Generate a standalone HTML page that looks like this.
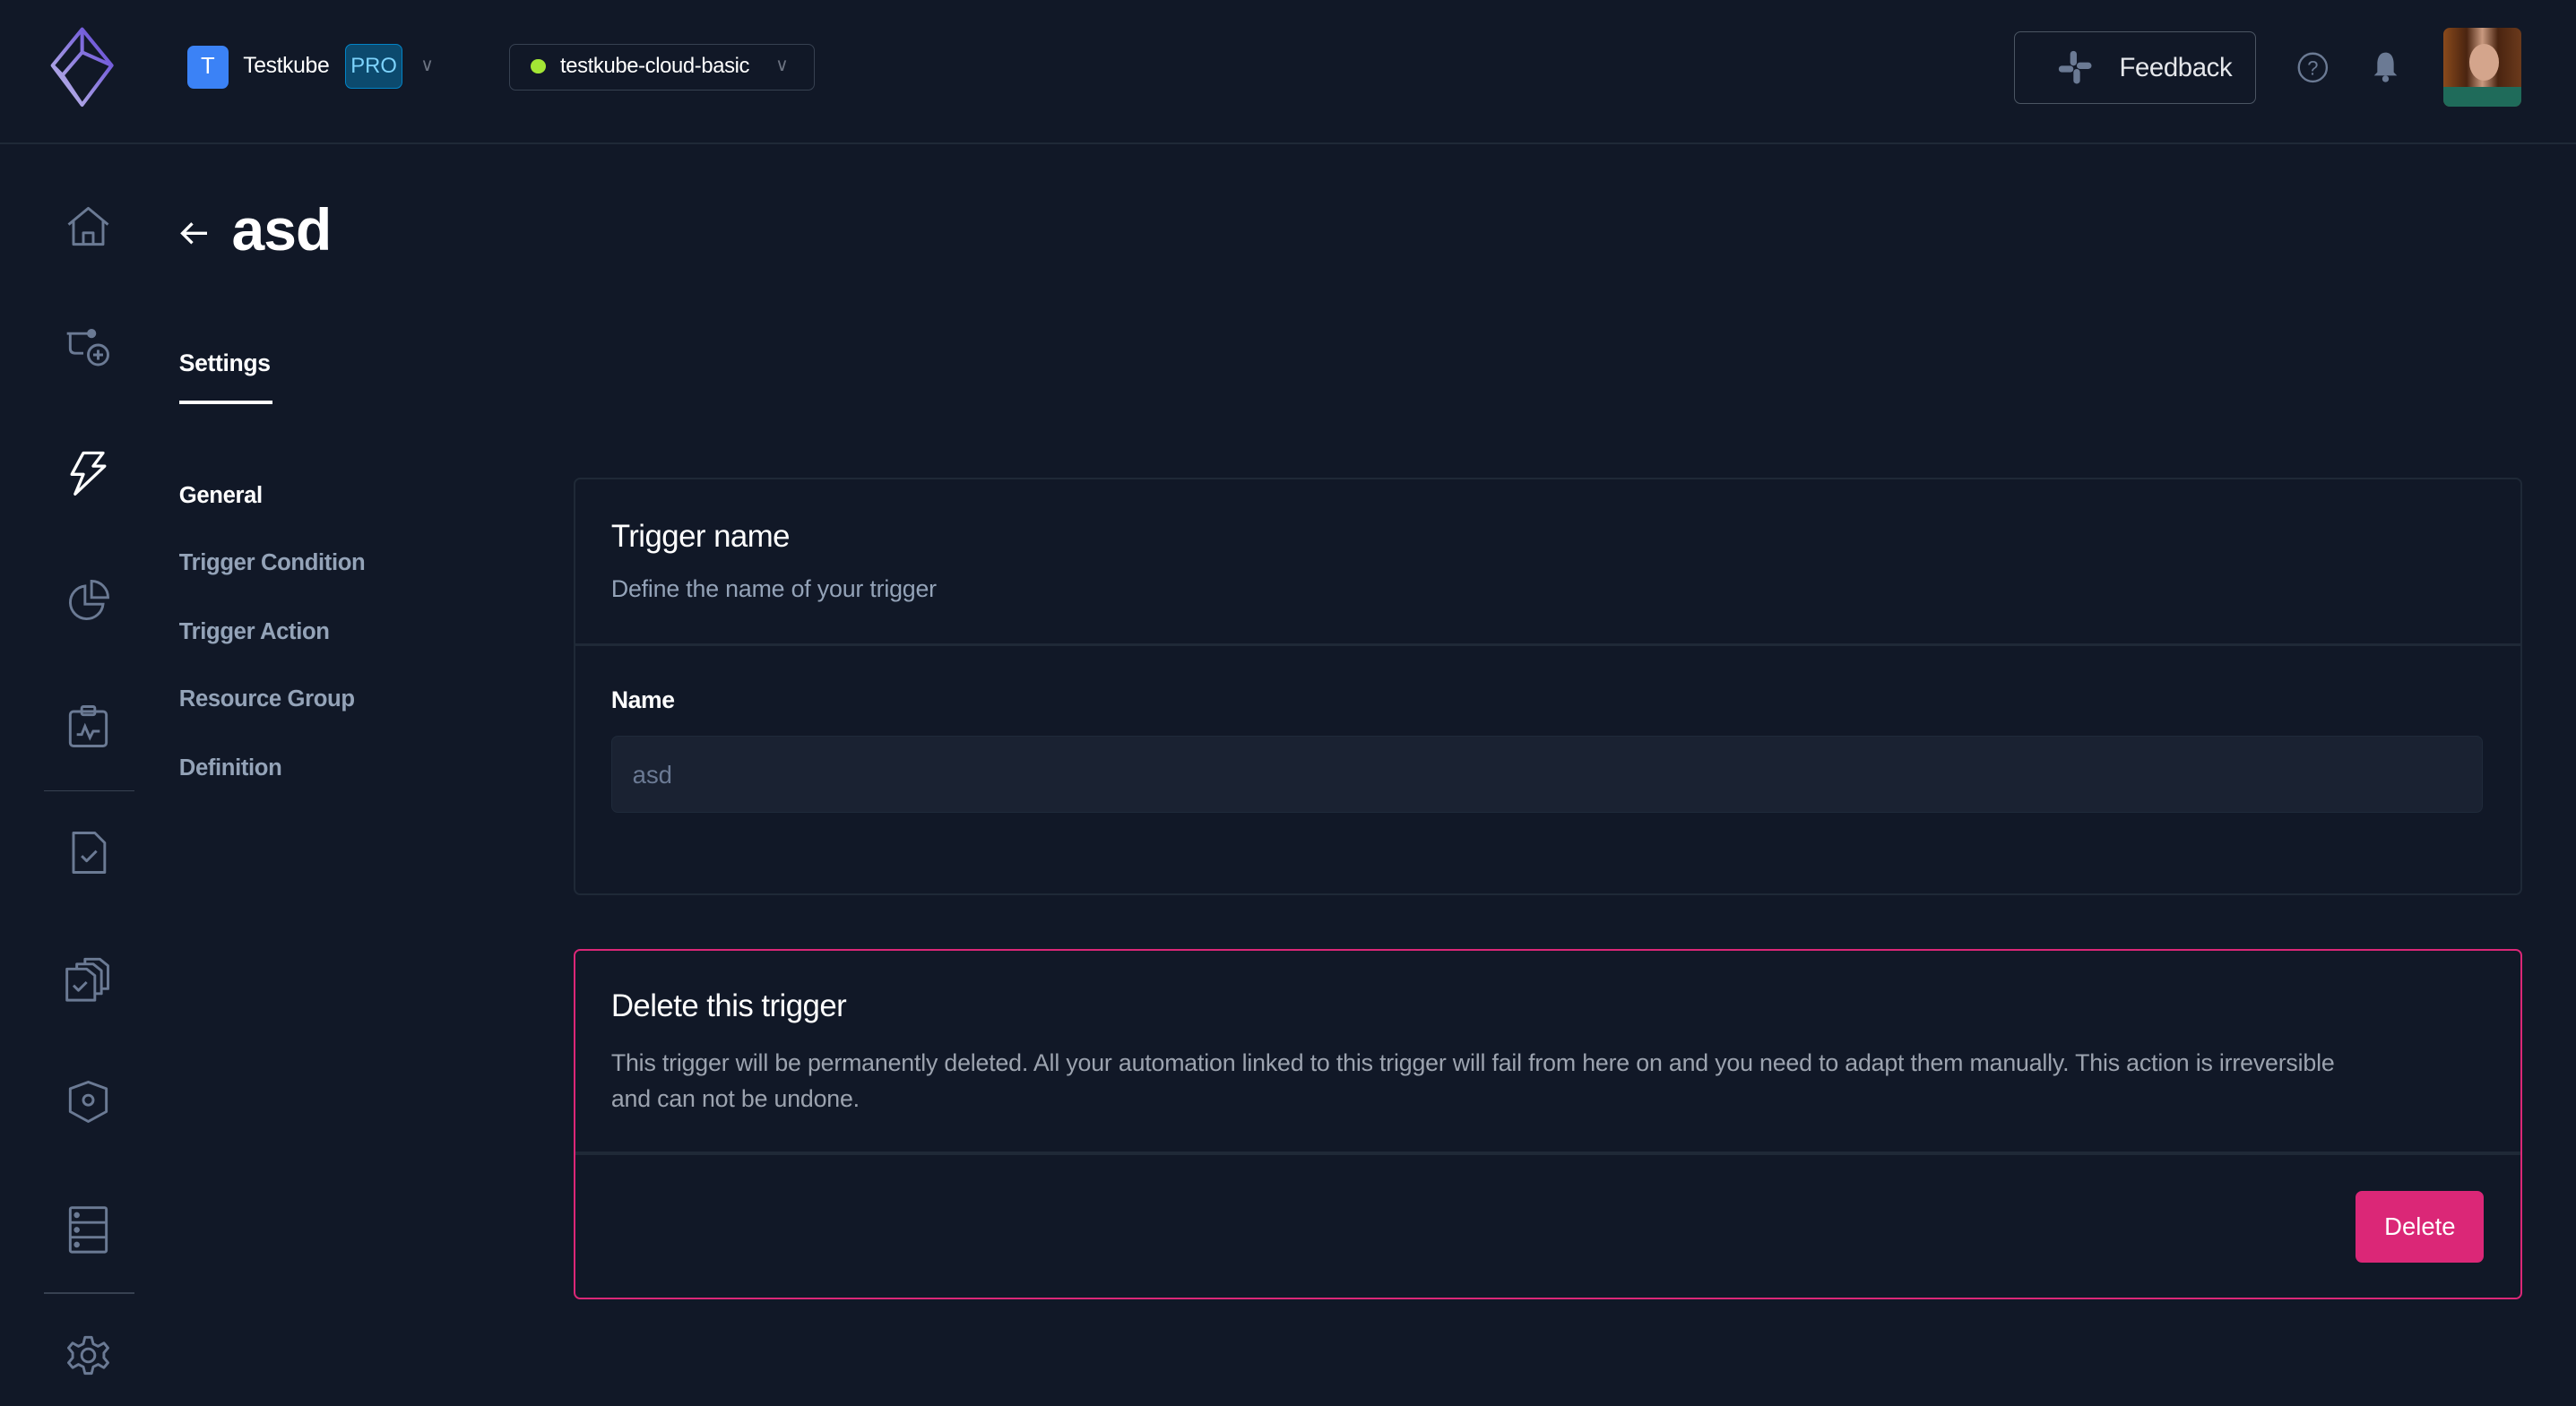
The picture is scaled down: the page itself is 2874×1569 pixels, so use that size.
<!DOCTYPE html>
<html><head><meta charset="utf-8"><style>
html,body{margin:0;padding:0;background:#111827;overflow:hidden}
#r{position:relative;width:1568px;height:856px;zoom:1.8329;font-family:"Liberation Sans",sans-serif;color:#fff;background:#111827}
.a{position:absolute}
.ic{position:absolute;left:39px;width:30px;height:30px}
.nav{position:absolute;left:109px;font-size:14px;font-weight:bold;color:#94a3b8;letter-spacing:-0.2px}
</style></head><body><div id="r">
<div class="a" style="left:0;top:87px;width:1568px;height:1px;background:#1f2937"></div>
<svg class="a" style="left:30px;top:16px" width="44" height="50" viewBox="0 0 44 50">
<defs><linearGradient id="g" x1="0" y1="1" x2="1" y2="0"><stop offset="0" stop-color="#c4c0e8"/><stop offset="1" stop-color="#5b3fd6"/></linearGradient></defs>
<g fill="none" stroke="url(#g)" stroke-width="2.2" stroke-linejoin="round"><path d="M20 2 L38 24 L20 48 L2 24 Z"/><path d="M20 2 V16 L8 30 L20 48 M20 16 L38 24 M8 30 L2 24"/></g></svg>
<div class="a" style="left:114px;top:28px;width:25px;height:26px;background:#3b82f6;border-radius:4px;font-size:14px;text-align:center;line-height:26px">T</div>
<div class="a" style="left:148px;top:33px;font-size:13.5px;letter-spacing:-0.2px">Testkube</div>
<div class="a" style="left:210px;top:27px;width:34px;height:26px;background:#0c4a6e;border:1px solid #0284c7;border-radius:4px;color:#7dd3fc;font-size:13px;text-align:center;line-height:26px">PRO</div>
<div class="a" style="left:256px;top:33px;font-size:11px;color:#6b7280">∨</div>
<div class="a" style="left:310px;top:27px;width:185px;height:27px;border:1px solid #374151;border-radius:4px"></div>
<div class="a" style="left:323px;top:36px;width:9px;height:9px;border-radius:50%;background:#a3e635"></div>
<div class="a" style="left:341px;top:33px;font-size:13px;letter-spacing:-0.2px">testkube-cloud-basic</div>
<div class="a" style="left:472px;top:33px;font-size:11px;color:#6b7280">∨</div>
<div class="a" style="left:1226px;top:19px;width:146px;height:43px;border:1px solid #4b5563;border-radius:4px"></div>
<svg class="a" style="left:1252px;top:30px" width="22" height="22" viewBox="0 0 22 22" fill="#6b7a94"><rect x="8" y="1" width="4" height="9" rx="2"/><rect x="12" y="8" width="9" height="4" rx="2"/><rect x="10" y="12" width="4" height="9" rx="2"/><rect x="1" y="10" width="9" height="4" rx="2"/></svg>
<div class="a" style="left:1290px;top:32px;font-size:16px;color:#e5e7eb;letter-spacing:-0.2px">Feedback</div>
<svg class="a" style="left:1398px;top:31px" width="20" height="20" viewBox="0 0 20 20"><circle cx="10" cy="10" r="8.5" fill="none" stroke="#6b7a94" stroke-width="1.3"/><text x="10" y="14.5" font-size="12" text-anchor="middle" fill="#6b7a94" font-family="Liberation Sans">?</text></svg>
<svg class="a" style="left:1443px;top:30px" width="18" height="22" viewBox="0 0 18 22" fill="#6b7a94"><path d="M9 2 C5 2 4 6 4 9 V14 L2 16 H16 L14 14 V9 C14 6 13 2 9 2Z"/><circle cx="9" cy="18" r="2"/></svg>
<div class="a" style="left:1487px;top:17px;width:48px;height:48px;border-radius:4px;background:linear-gradient(90deg,#8a4a1c,#4a2410 30%,#c99a80 50%,#4a2410 70%,#6b3a1c);overflow:hidden"><div class="a" style="left:0;top:36px;width:48px;height:12px;background:#1f6b5a"></div><div class="a" style="left:16px;top:10px;width:18px;height:22px;border-radius:50%;background:#d4a58c"></div></div>
<div class="a" style="left:27px;top:481px;width:55px;height:1px;background:#374151"></div>
<div class="a" style="left:27px;top:787px;width:55px;height:1px;background:#374151"></div>
<svg class="ic" style="top:123px" viewBox="0 0 30 30" fill="none" stroke="#6b7a94" stroke-width="1.6" stroke-linejoin="round"><path d="M3 14 L15 4 L27 14 M6 12 V26 H24 V12 M12 26 V19 H18 V26"/></svg>
<svg class="ic" style="top:198px" viewBox="0 0 30 30" fill="none" stroke="#6b7a94" stroke-width="1.6"><path d="M2 5 H15 M4 5 V14 Q4 17 7 17 H12"/><circle cx="17" cy="5" r="2" fill="#6b7a94"/><circle cx="21" cy="18" r="6"/><path d="M21 15 V21 M18 18 H24"/></svg>
<svg class="ic" style="top:273px" viewBox="0 0 30 30" fill="none" stroke="#fff" stroke-width="1.8" stroke-linejoin="round"><path d="M12 3 H24 L18 11 H25 L7 28 L12 16 H5 Z"/></svg>
<svg class="ic" style="top:351px" viewBox="0 0 30 30" fill="none" stroke="#6b7a94" stroke-width="1.6"><path d="M13 6 A10 10 0 1 0 24 17 H13 Z"/><path d="M17 3 A10 10 0 0 1 27 13 H17 Z"/></svg>
<svg class="ic" style="top:427px" viewBox="0 0 30 30" fill="none" stroke="#6b7a94" stroke-width="1.6"><rect x="4" y="6" width="22" height="21" rx="2"/><rect x="11" y="3" width="8" height="5" rx="1"/><path d="M8 20 H11 L13 15 L16 22 L18 18 H22"/></svg>
<svg class="ic" style="top:504px" viewBox="0 0 30 30" fill="none" stroke="#6b7a94" stroke-width="1.6" stroke-linejoin="round"><path d="M6 3 H19 L25 9 V27 H6 Z"/><path d="M11 17 L14 20 L20 14"/></svg>
<svg class="ic" style="top:580px" viewBox="0 0 30 30" fill="none" stroke="#6b7a94" stroke-width="1.6" stroke-linejoin="round"><path d="M2 10 H14 L19 14 V29 H2 Z"/><path d="M8 10 V7 H18 L23 11 V25 H19"/><path d="M13 7 V4 H22 L27 8 V22 H23"/><path d="M6 20 L9 23 L14 18"/></svg>
<svg class="ic" style="top:656px" viewBox="0 0 30 30" fill="none" stroke="#6b7a94" stroke-width="1.6" stroke-linejoin="round"><path d="M15 3 L26 7 V21 L15 27 L4 21 V7 Z"/><circle cx="15" cy="14" r="3"/></svg>
<svg class="ic" style="top:733px" viewBox="0 0 30 30" fill="none" stroke="#6b7a94" stroke-width="1.6"><rect x="4" y="2" width="22" height="27" rx="1"/><path d="M4 11 H26 M4 20 H26"/><circle cx="8" cy="6.5" r="1" fill="#6b7a94"/><circle cx="8" cy="15.5" r="1" fill="#6b7a94"/><circle cx="8" cy="24.5" r="1" fill="#6b7a94"/></svg>
<svg class="ic" style="top:810px" viewBox="0 0 30 30" fill="none" stroke="#6b7a94" stroke-width="1.6" stroke-linejoin="round"><path d="M13 4 H17 L18 8 L21 9.5 L24.5 7.5 L27 10.5 L24.5 13.5 V16.5 L27 19.5 L24.5 22.5 L21 20.5 L18 22 L17 26 H13 L12 22 L9 20.5 L5.5 22.5 L3 19.5 L5.5 16.5 V13.5 L3 10.5 L5.5 7.5 L9 9.5 L12 8 Z"/><circle cx="15" cy="15" r="4"/></svg>
<svg class="a" style="left:108px;top:132px" width="20" height="20" viewBox="0 0 20 20" fill="none" stroke="#fff" stroke-width="1.8"><path d="M18 10 H3 M9 4 L3 10 L9 16"/></svg>
<div class="a" style="left:141px;top:119px;font-size:36px;font-weight:bold;letter-spacing:-0.5px">asd</div>
<div class="a" style="left:109px;top:213px;font-size:14.5px;font-weight:bold;letter-spacing:-0.2px">Settings</div>
<div class="a" style="left:109px;top:244px;width:57px;height:2px;background:#fff"></div>
<div class="nav" style="top:294px;color:#fff">General</div>
<div class="nav" style="top:335px">Trigger Condition</div>
<div class="nav" style="top:377px">Trigger Action</div>
<div class="nav" style="top:418px">Resource Group</div>
<div class="nav" style="top:460px">Definition</div>
<div class="a" style="left:349px;top:291px;width:1184px;height:252px;border:1.2px solid #1f2937;border-radius:4px"></div>
<div class="a" style="left:350px;top:392px;width:1184px;height:1.2px;background:#1f2937"></div>
<div class="a" style="left:372px;top:316px;font-size:19px;letter-spacing:-0.3px">Trigger name</div>
<div class="a" style="left:372px;top:350px;font-size:14.6px;color:#94a3b8;letter-spacing:-0.1px">Define the name of your trigger</div>
<div class="a" style="left:372px;top:418px;font-size:14.5px;font-weight:bold;letter-spacing:-0.2px">Name</div>
<div class="a" style="left:372px;top:448px;width:1138px;height:46px;background:#1a2232;border:1px solid #1f2a3a;border-radius:4px"></div>
<div class="a" style="left:385px;top:463px;font-size:15px;color:#6b7a94">asd</div>
<div class="a" style="left:349px;top:578px;width:1184px;height:211px;border:1.3px solid #db2777;border-radius:4px"></div>
<div class="a" style="left:350px;top:701px;width:1184px;height:2px;background:#1f2937"></div>
<div class="a" style="left:372px;top:602px;font-size:19px;letter-spacing:-0.3px">Delete this trigger</div>
<div class="a" style="left:372px;top:636px;width:1125px;font-size:14.6px;line-height:22px;color:#9ca3af;letter-spacing:-0.1px">This trigger will be permanently deleted. All your automation linked to this trigger will fail from here on and you need to adapt them manually. This action is irreversible<br>and can not be undone.</div>
<div class="a" style="left:1434px;top:725px;width:78px;height:44px;background:#db2777;border-radius:4px;font-size:15px;text-align:center;line-height:44px">Delete</div>
</div></body></html>
